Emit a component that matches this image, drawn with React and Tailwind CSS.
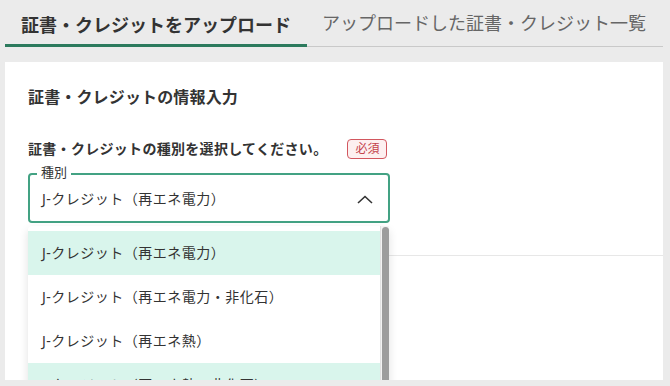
import React from "react";

const font = { fontFamily: '"Noto Sans", "Noto Sans CJK JP", sans-serif' };

export default function App() {
  const items = [
    { label: "J-クレジット（再エネ電力）", hl: true },
    { label: "J-クレジット（再エネ電力・非化石）", hl: false },
    { label: "J-クレジット（再エネ熱）", hl: false },
    { label: "J-クレジット（再エネ熱・非化石）", hl: true },
  ];
  return (
    <div
      className="w-[670px] h-[386px] bg-[#ebebeb] overflow-hidden text-[#333]"
      style={font}
    >
      {/* Tabs */}
      <div className="flex h-[47px] ml-[5px] mr-[7px] border-b border-[#c9c9c9]">
        <div className="h-[47px] -mb-px px-[16px] pt-[6px] flex items-center border-b-[3px] border-[#2c7a5d] text-[18px] font-bold text-[#333] leading-[24px]">
          証書・クレジットをアップロード
        </div>
        <div className="h-[46px] px-[15px] pt-[6px] flex items-center text-[18px] text-[#666] leading-[24px] -mt-[3px]">
          アップロードした証書・クレジット一覧
        </div>
      </div>

      {/* Card */}
      <div className="relative overflow-hidden mt-[15px] ml-[5px] mr-[7px] h-[318px] bg-white">
        <div className="pt-[23px] pl-[23px] flex flex-col">
          <div className="text-[16px] font-bold leading-[24px] text-[#333] tracking-[0.15px]">
            証書・クレジットの情報入力
          </div>
          <div className="mt-[30px] flex items-center h-[20px]">
            <span className="text-[14px] font-bold leading-[20px] text-[#333] tracking-[0.3px]">
              証書・クレジットの種別を選択してください。
            </span>
            <span className="ml-[20px] h-[20px] px-[7px] flex items-center rounded-[4px] border border-[#d2575f] bg-[#fdf0f0] text-[12px] leading-[16px] text-[#c4424b]">
              必須
            </span>
          </div>
          <div className="mt-[14px] relative w-[362px] h-[50px] rounded-[4px] border-2 border-[#43a283] flex items-center justify-between pl-[12px] pr-[15px] pt-[2px]">
            <span className="absolute -top-[11px] left-[7px] px-[4px] bg-white text-[13px] leading-[16px] text-[#333]">
              種別
            </span>
            <span className="text-[14px] leading-[20px] text-[#333] tracking-[0.5px]">
              J-クレジット（再エネ電力）
            </span>
            <svg width="16" height="9" viewBox="0 0 16 9" fill="none">
              <polyline
                points="1,8 8,1.5 15,8"
                stroke="#333"
                strokeWidth="1.6"
                fill="none"
              />
            </svg>
          </div>
          <div className="mt-[32px] h-px bg-[#e7e7e7]" />
        </div>

        {/* Dropdown menu */}
        <div className="absolute left-[23px] top-[164px] w-[361px] h-[200px] bg-white rounded-[4px] shadow-[0_4px_10px_rgba(0,0,0,0.12)] flex">
          <div className="flex-1 pt-[5px] flex flex-col">
            {items.map((it, i) => (
              <div
                key={i}
                className={`h-[44px] flex items-center pl-[14px] text-[14px] leading-[20px] text-[#333] tracking-[0.5px] ${
                  it.hl ? "bg-[#d9f5ec]" : "bg-white"
                }`}
              >
                {it.label}
              </div>
            ))}
          </div>
          <div className="w-[9px] bg-[#f3f3f3] border-l border-[#e2e2e2] flex justify-center pt-[1px]">
            <div className="w-[7px] h-full rounded-[4px] bg-[#9d9d9d]" />
          </div>
        </div>
      </div>
    </div>
  );
}
